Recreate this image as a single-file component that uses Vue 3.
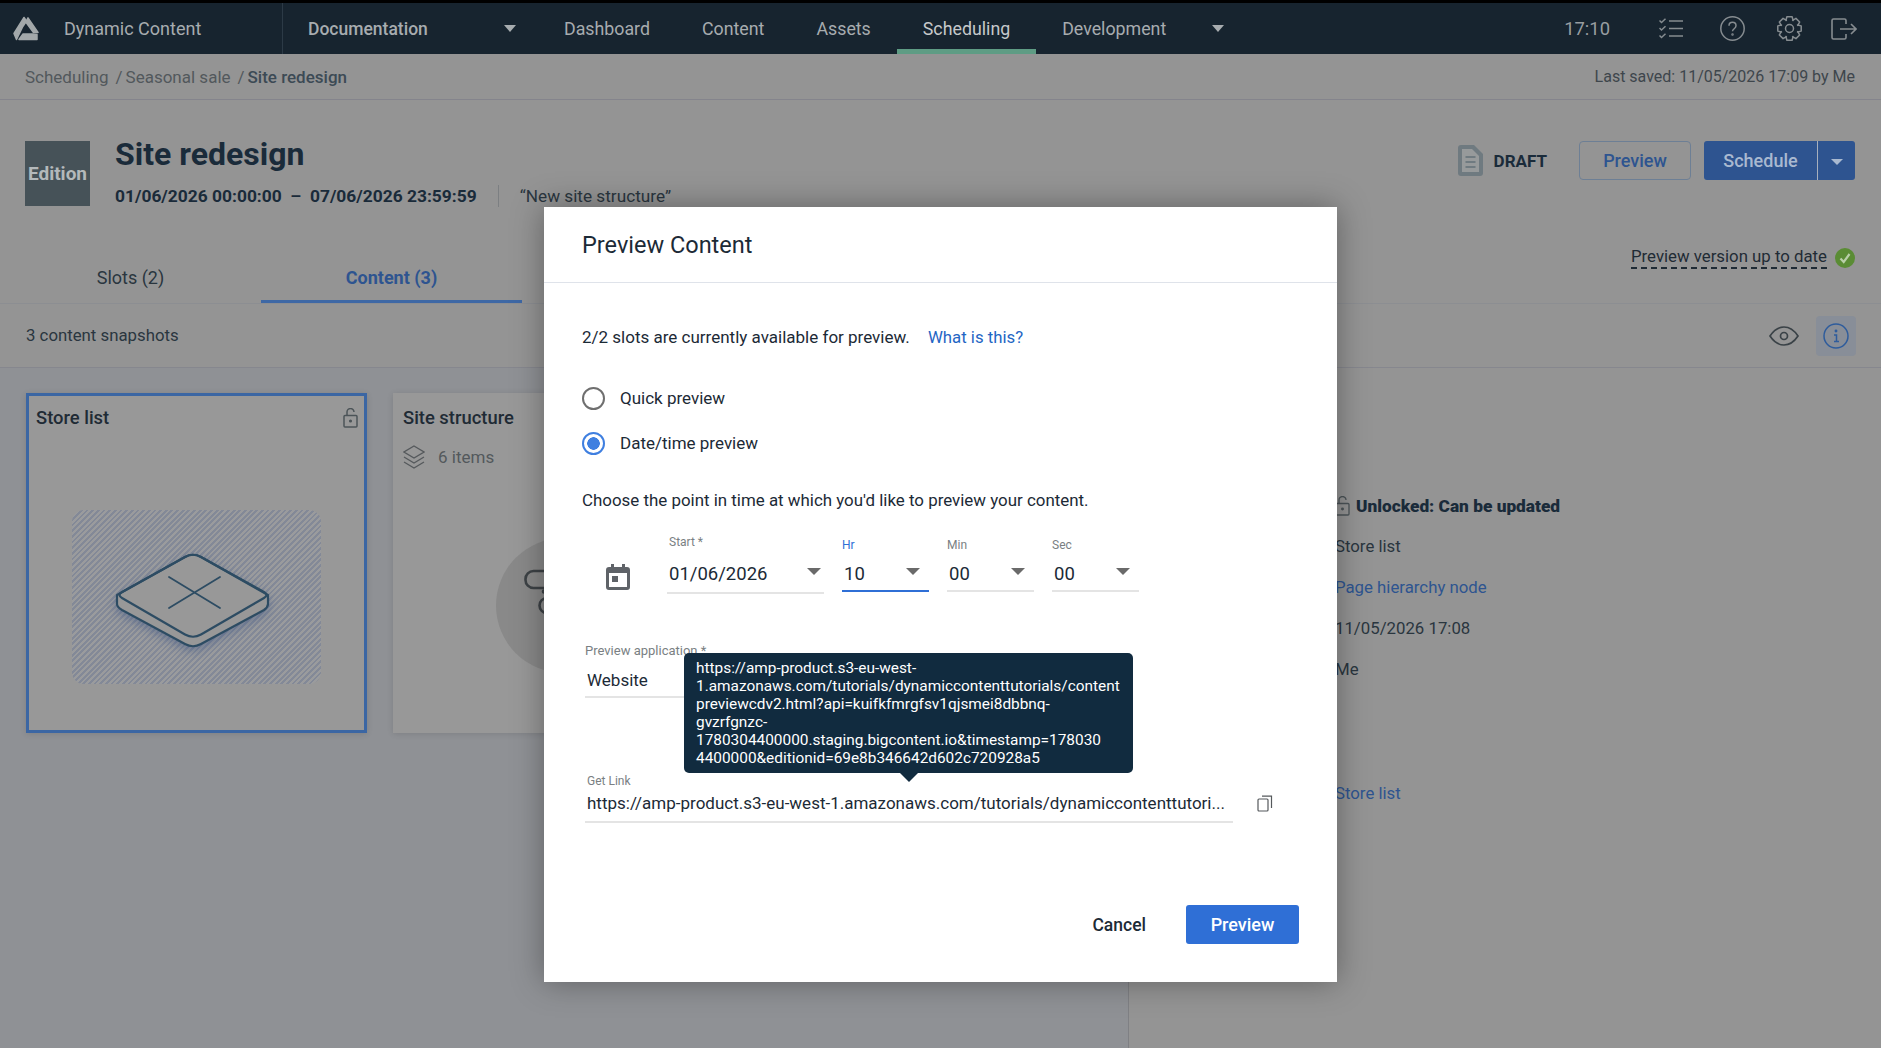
<script setup>
const navItems = ['Dashboard', 'Content', 'Assets', 'Scheduling', 'Development']

const tooltipLines = [
  'https://amp-product.s3-eu-west-',
  '1.amazonaws.com/tutorials/dynamiccontenttutorials/content',
  'previewcdv2.html?api=kuifkfmrgfsv1qjsmei8dbbnq-',
  'gvzrfgnzc-',
  '1780304400000.staging.bigcontent.io&timestamp=178030',
  '4400000&editionid=69e8b346642d602c720928a5'
]

const timeFields = [
  { label: 'Hr', value: '10', active: true },
  { label: 'Min', value: '00' },
  { label: 'Sec', value: '00' }
]

// eight toothed cog outline
function gearPath(cx, cy, outer, inner) {
  const pts = []
  for (let i = 0; i < 8; i++) {
    const a = (i * Math.PI) / 4
    const w = 0.22
    const s = 0.2
    const at = (r, t) => `${(cx + r * Math.sin(t)).toFixed(2)} ${(cy - r * Math.cos(t)).toFixed(2)}`
    pts.push(at(inner, a - w - s), at(outer, a - w), at(outer, a + w), at(inner, a + w + s))
  }
  return 'M' + pts.join('L') + 'Z'
}
const gear = gearPath(12.5, 12.5, 12, 8.8)
</script>

<template>
  <div class="page">
    <header class="topbar">
      <div class="brand">
        <svg class="logo" viewBox="0 0 26 25" width="26" height="25" fill="#a3a8aa" stroke="#a3a8aa" stroke-width="1.500" stroke-linejoin="round">
          <path d="M11 1.500L13.500 5 9.800 10.500 3.500 23.500 1 17.500z" />
          <path d="M15 1.800L25 16.500 20.500 16.500 12.800 6z" />
          <path d="M10 18H19.500L24 18.500 24 23.500 6 23.500z" />
        </svg>
        <span>Dynamic Content</span>
      </div>
      <div class="doc-select">
        <span>Documentation</span>
        <i class="caret"></i>
      </div>
      <nav class="nav">
        <a v-for="item in navItems" :key="item" :class="{ current: item === 'Scheduling' }">{{ item }}</a>
        <i class="caret dev-caret"></i>
      </nav>
      <div class="topbar-right">
        <span class="clock">17:10</span>
        <svg class="ic-tasks" viewBox="0 0 24 21" width="24" height="21" fill="none" stroke="#868c90" stroke-width="1.500">
          <path d="M.5 2.500l2 2L6.500.8M.5 10l2 2 4-3.700M.5 17.500l2 2 4-3.700" />
          <path d="M10 3h14M10 10.500h14M10 18h14" />
        </svg>
        <svg class="ic-help" viewBox="0 0 25 25" width="25" height="25" fill="none" stroke="#868c90" stroke-width="1.500">
          <circle cx="12.500" cy="12.500" r="11.700" />
          <path d="M9 9.800c0-4.600 7-4.600 7 0 0 2.900-3.500 2.900-3.500 5.500" />
          <circle cx="12.500" cy="18.600" r=".5" />
        </svg>
        <svg class="ic-gear" viewBox="0 0 25 25" width="25" height="25" fill="none" stroke="#868c90" stroke-width="1.500" stroke-linejoin="round">
          <path :d="gear" />
          <circle cx="12.500" cy="12.500" r="4" />
        </svg>
        <svg class="ic-exit" viewBox="0 0 26 22" width="26" height="22" fill="none" stroke="#868c90" stroke-width="1.600">
          <path d="M15 6V2.500A1.500 1.500 0 0 0 13.500 1H2.500A1.500 1.500 0 0 0 1 2.500v17A1.500 1.500 0 0 0 2.500 21h11a1.500 1.500 0 0 0 1.500-1.500V16" />
          <path d="M9 11h16M20 6l5 5-5 5" />
        </svg>
      </div>
    </header>

    <div class="crumbs">
      <span>Scheduling</span><span class="sep">/</span><span>Seasonal sale</span><span class="sep">/</span><b>Site redesign</b>
      <span class="saved">Last saved: 11/05/2026 17:09 by Me</span>
    </div>

    <section class="edition">
      <div class="thumb">Edition</div>
      <div class="edition-info">
        <h1>Site redesign</h1>
        <div class="dates">
          <b>01/06/2026 00:00:00 &nbsp;–&nbsp; 07/06/2026 23:59:59</b>
          <span class="quote">“New site structure”</span>
        </div>
      </div>
      <div class="edition-actions">
        <svg viewBox="0 0 25 31" width="25" height="31">
          <path d="M3 0h13l9 9v19a3 3 0 0 1-3 3H3a3 3 0 0 1-3-3V3a3 3 0 0 1 3-3z" fill="#6f7a80" />
          <path d="M4 4h10l7 7v16H4z" fill="#979a9b" />
          <path d="M7.500 12h10M7.500 17h10M7.500 22h10" stroke="#6f7a80" stroke-width="2" />
        </svg>
        <b class="draft">DRAFT</b>
        <button class="btn-outline">Preview</button>
        <div class="split">
          <button>Schedule</button>
          <button class="split-arrow"><i></i></button>
        </div>
      </div>
    </section>

    <div class="tabs">
      <a>Slots (2)</a>
      <a class="current">Content (3)</a>
      <div class="version">
        <span>Preview version up to date</span>
        <svg viewBox="0 0 20 20" width="20" height="20">
          <circle cx="10" cy="10" r="10" fill="#5a8c34" />
          <path d="M5.500 10.500l3.200 3.500 5.800-8" fill="none" stroke="#b9cfa8" stroke-width="2.200" />
        </svg>
      </div>
    </div>

    <div class="toolbar">
      <span class="count">3 content snapshots</span>
      <div class="toolbar-icons">
        <svg viewBox="0 0 30 20" width="30" height="20" fill="none" stroke="#3a4247" stroke-width="1.700">
          <path d="M1 10C6 2.500 10 1 15 1s9 1.500 14 9c-5 7.500-9 9-14 9S6 17.500 1 10z" />
          <circle cx="15" cy="10" r="3.500" />
        </svg>
        <div class="info-toggle">
          <svg viewBox="0 0 26 26" width="26" height="26" fill="none" stroke="#2e5c9c" stroke-width="1.500">
            <circle cx="13" cy="13" r="12" />
            <path d="M11 12h2.500v6.500M11 18.500h5" />
            <circle cx="13" cy="8" r=".7" />
          </svg>
        </div>
      </div>
    </div>

    <main class="panes">
      <div class="cards">
        <article class="card selected">
          <div class="card-head">
            <h3>Store list</h3>
            <svg viewBox="0 0 15 20" width="15" height="20" fill="none" stroke="#4c5458" stroke-width="1.500">
              <rect x="1" y="7.500" width="13" height="11.500" rx="1" />
              <path d="M4 7.500V4a3.500 3.500 0 0 1 7 0" />
              <circle cx="7.500" cy="13" r=".8" fill="#4c5458" />
            </svg>
          </div>
          <div class="hatch">
            <svg class="plate" viewBox="0 0 249 174" width="249" height="174" fill="none" stroke="#2d4c63" stroke-width="2.200" stroke-linejoin="round">
              <path d="M45 85V94Q45 97 50 100L113 134Q121 138.500 129 134L192 100Q196 97 196 94V85L129 47Q121 42.500 113 47Z" fill="#989898" />
              <path d="M113 47Q121 42.500 129 47L192 82Q197 85 192 88L129 124.500Q121 129 113 124.500L50 88Q45 85 50 82Z" />
              <path d="M97 67L148 98M97 98L148 67" stroke-width="1.800" stroke-linecap="round" />
            </svg>
          </div>
        </article>
        <article class="card">
          <div class="card-head">
            <h3>Site structure</h3>
          </div>
          <div class="items">
            <svg viewBox="0 0 22 24" width="22" height="24" fill="none" stroke="#55595c" stroke-width="1.300">
              <path d="M11 1l10 6-10 6L1 7z" />
              <path d="M1 12l10 6 10-6M1 17l10 6 10-6" />
            </svg>
            <span>6 items</span>
          </div>
          <div class="bubble">
            <svg viewBox="0 0 80 80" width="80" height="80" fill="none" stroke="#3d4246" stroke-width="2.600">
              <rect x="1.500" y="5" width="60" height="17" rx="8" />
              <rect x="15.500" y="32" width="40" height="15" rx="7.500" />
              <circle cx="20" cy="25.500" r="1" />
            </svg>
          </div>
        </article>
      </div>

      <aside class="details">
        <div class="lock-row">
          <svg viewBox="0 0 15 20" width="15" height="20" fill="none" stroke="#4c5458" stroke-width="1.300">
            <rect x="1" y="7.500" width="13" height="11.500" rx="1" />
            <path d="M4 7.500V4a3.500 3.500 0 0 1 7 0" />
            <circle cx="7.500" cy="13" r=".8" fill="#4c5458" />
          </svg>
          <b>Unlocked: Can be updated</b>
        </div>
        <p>Store list</p>
        <p class="link">Page hierarchy node</p>
        <p>11/05/2026 17:08</p>
        <p>Me</p>
        <p class="link last">Store list</p>
      </aside>
    </main>

    <div class="modal-layer">
      <div class="modal">
        <h2>Preview Content</h2>
        <div class="modal-body">
          <p class="availability">
            2/2 slots are currently available for preview.
            <a>What is this?</a>
          </p>
          <label class="radio"><i></i>Quick preview</label>
          <label class="radio on"><i></i>Date/time preview</label>
          <p class="choose">Choose the point in time at which you'd like to preview your content.</p>

          <div class="when">
            <svg class="calendar" viewBox="0 0 24 26" width="24" height="26">
              <path d="M5 0h3v3h8V0h3v3h2a3 3 0 0 1 3 3v17a3 3 0 0 1-3 3H3a3 3 0 0 1-3-3V6a3 3 0 0 1 3-3h2z" fill="#5f6368" />
              <rect x="3" y="9" width="18" height="14" fill="#fff" />
              <rect x="6" y="12" width="6" height="6" fill="#5f6368" />
            </svg>
            <div class="field start">
              <label>Start *</label>
              <div class="value">01/06/2026<i class="arrow"></i></div>
            </div>
            <div v-for="f in timeFields" :key="f.label" class="field time" :class="{ active: f.active }">
              <label>{{ f.label }}</label>
              <div class="value">{{ f.value }}<i class="arrow"></i></div>
            </div>
          </div>

          <div class="field application">
            <label>Preview application *</label>
            <div class="value">Website</div>
          </div>

          <div class="link-row">
            <div class="field get-link">
              <label>Get Link</label>
              <div class="value url">https://amp-product.s3-eu-west-1.amazonaws.com/tutorials/dynamiccontenttutori...</div>
              <div class="tooltip">
                <div v-for="line in tooltipLines" :key="line">{{ line }}</div>
              </div>
            </div>
            <svg class="copy" viewBox="0 0 16 17" width="16" height="17" fill="none" stroke="#55595c" stroke-width="1.200">
              <rect x="1" y="4" width="10" height="12" rx="1" />
              <path d="M5 1.200h9.500V13" />
            </svg>
          </div>
        </div>
        <footer class="modal-actions">
          <button class="cancel">Cancel</button>
          <button class="primary">Preview</button>
        </footer>
      </div>
    </div>
  </div>
</template>

<style>
html, body {
  margin: 0;
  background: #949494;
}
</style>

<style scoped>
* {
  box-sizing: border-box;
}
.page {
  position: relative;
  width: 1881px;
  height: 1048px;
  overflow: hidden;
  display: flex;
  flex-direction: column;
  background: #949494;
  color: #1f2b35;
  font-family: Roboto, "Noto Sans", sans-serif;
  font-size: 17px;
}
p, h1, h2, h3 {
  margin: 0;
}
a {
  cursor: pointer;
}

/* top bar */
.topbar {
  display: flex;
  align-items: center;
  height: 54px;
  border-top: 3px solid #000;
  background: #17242f;
  color: #a7acaf;
  flex: none;
}
.brand {
  display: flex;
  align-items: center;
  width: 283px;
  height: 100%;
  padding-left: 13px;
  gap: 25px;
  border-right: 1px solid #2c3a46;
  font-size: 18px;
}
.logo {
  flex: none;
}
.doc-select {
  display: flex;
  align-items: center;
  justify-content: space-between;
  width: 255px;
  padding: 0 22px 0 25px;
  font-size: 17.5px;
  font-weight: 500;
}
.caret {
  width: 0;
  height: 0;
  border-left: 6.500px solid transparent;
  border-right: 6.500px solid transparent;
  border-top: 7px solid #a7acaf;
}
.nav {
  display: flex;
  align-items: center;
  height: 100%;
}
.nav a {
  display: flex;
  align-items: center;
  height: 100%;
  padding: 0 26px;
  font-size: 17.800px;
  border-bottom: 5px solid transparent;
  border-top: 5px solid transparent;
}
.nav a.current {
  color: #c6c9cb;
  border-bottom-color: #5e9c84;
}
.dev-caret {
  margin-left: 20px;
}
.topbar-right {
  margin-left: auto;
  display: flex;
  align-items: center;
  padding-right: 24px;
}
.clock {
  font-size: 18.400px;
  color: #989da0;
}
.ic-tasks {
  margin-left: 49px;
}
.ic-help {
  margin-left: 37px;
}
.ic-gear {
  margin-left: 32px;
}
.ic-exit {
  margin-left: 29px;
}

/* breadcrumb */
.crumbs {
  display: flex;
  align-items: center;
  height: 46px;
  padding: 0 26px 0 25px;
  border-bottom: 1px solid #84848c;
  color: #52585c;
  flex: none;
}
.crumbs b {
  color: #3c4a55;
  font-weight: 500;
}
.sep {
  margin: 0 3px 0 7px;
}
.saved {
  margin-left: auto;
  font-size: 16px;
  color: #3e464c;
}

/* edition head */
.edition {
  display: flex;
  height: 141px;
  padding: 41px 26px 0 25px;
  flex: none;
}
.thumb {
  display: flex;
  align-items: center;
  justify-content: center;
  width: 65px;
  height: 65px;
  background: #465258;
  color: #b4b9bb;
  font-weight: 700;
  font-size: 19px;
}
.edition-info {
  margin-left: 25px;
}
h1 {
  margin-top: -1px;
  font-size: 32px;
  line-height: 28px;
  font-weight: 700;
  color: #1a2b3a;
}
.dates {
  display: flex;
  align-items: center;
  margin-top: 17px;
  color: #1a2b3a;
  font-size: 17.400px;
}
.dates b {
  font-weight: 700;
}
.quote {
  margin-left: 21px;
  padding-left: 21px;
  border-left: 1px solid #7c7f82;
  line-height: 22px;
  font-size: 17.200px;
  color: #2a363f;
}
.edition-actions {
  margin-left: auto;
  display: flex;
  align-items: center;
  height: 39px;
}
.draft {
  margin: 0 32px 0 11px;
  font-weight: 700;
  color: #1a2b3a;
}
button {
  font-family: inherit;
  cursor: pointer;
}
.btn-outline {
  width: 112px;
  height: 39px;
  margin-right: 13px;
  border: 1.500px solid #6d7f95;
  border-radius: 4px;
  background: transparent;
  color: #2e5490;
  font-size: 18px;
  font-weight: 500;
}
.split {
  display: flex;
  height: 39px;
  border-radius: 3px;
  overflow: hidden;
  background: #2e5490;
}
.split button {
  width: 113px;
  border: 0;
  background: none;
  color: #a9b9d0;
  font-size: 18px;
  font-weight: 500;
}
.split .split-arrow {
  display: flex;
  align-items: center;
  justify-content: center;
  width: 38px;
  padding-top: 4px;
  border-left: 1px solid #a7b0bd;
}
.split-arrow i {
  border-left: 6px solid transparent;
  border-right: 6px solid transparent;
  border-top: 6px solid #a9b9d0;
}

/* tabs */
.tabs {
  display: flex;
  align-items: flex-start;
  height: 63px;
  border-bottom: 1px solid #8c8e92;
  flex: none;
  font-size: 18px;
}
.tabs a {
  width: 261px;
  height: 62px;
  padding-top: 26px;
  text-align: center;
  color: #2a363f;
}
.tabs a.current {
  color: #2e5490;
  font-weight: 700;
  border-bottom: 3px solid #3e68a5;
}
.version {
  margin-left: auto;
  margin-right: 26px;
  margin-top: 5px;
  display: flex;
  align-items: center;
  gap: 8px;
  font-size: 16.800px;
  color: #1f2b35;
}
.version span {
  border-bottom: 2px dashed #1f2b35;
  padding-bottom: 1px;
}

/* toolbar */
.toolbar {
  display: flex;
  align-items: center;
  justify-content: space-between;
  height: 64px;
  padding: 0 25px 0 26px;
  border-bottom: 1px solid #86878e;
  flex: none;
  color: #2a363f;
}
.count {
  font-size: 16.800px;
  margin-bottom: 2px;
}
.toolbar-icons {
  display: flex;
  align-items: center;
  gap: 17px;
}
.info-toggle {
  display: flex;
  align-items: center;
  justify-content: center;
  width: 40px;
  height: 40px;
  border-radius: 4px;
  background: #888e98;
}

/* panes */
.panes {
  flex: 1;
  display: flex;
  min-height: 0;
}
.cards {
  width: 1129px;
  flex: none;
  display: flex;
  align-items: flex-start;
  gap: 26px;
  padding: 25px 0 0 26px;
  background: #8f9195;
  border-right: 1px solid #7f8084;
}
.card {
  position: relative;
  width: 341px;
  height: 340px;
  padding: 13px 10px;
  background: #989898;
  box-shadow: 0 1px 6px rgba(0, 0, 0, 0.12);
}
.card.selected {
  border: 3px solid #3b66a3;
  padding: 10px 7px;
}
.card-head {
  display: flex;
  align-items: center;
  justify-content: space-between;
}
.card-head svg {
  margin-right: -1px;
}
h3 {
  font-size: 18.400px;
  font-weight: 500;
  color: #1f2b35;
  line-height: 24px;
}
.hatch {
  margin: 80px 0 0 36px;
  width: 249px;
  height: 174px;
  border-radius: 12px;
  background: repeating-linear-gradient(135deg, #9a9b9d 0, #9a9b9d 2px, #838997 2px, #838997 4px);
}
.plate {
  filter: drop-shadow(0 4px 4px rgba(60, 85, 130, 0.45));
}
.items {
  display: flex;
  align-items: center;
  gap: 13px;
  margin-top: 15px;
  color: #53585c;
}
.bubble {
  position: absolute;
  left: 103px;
  top: 145px;
  display: flex;
  align-items: center;
  justify-content: center;
  width: 135px;
  height: 135px;
  border-radius: 50%;
  background: #898989;
}
.details {
  padding: 126px 0 0 206px;
  line-height: 24px;
  font-size: 16.800px;
  color: #2a363f;
}
.lock-row {
  display: flex;
  align-items: center;
  gap: 6px;
  color: #1a2b3a;
  margin-bottom: 16px;
  font-size: 17.300px;
  font-weight: 700;
}
.details p {
  margin-bottom: 17px;
  white-space: nowrap;
}
.details p.link {
  color: #2e5490;
}
.details p.last {
  margin-top: 100px;
}

/* modal */
.modal-layer {
  position: absolute;
  inset: 0;
  display: flex;
  justify-content: center;
  align-items: flex-start;
  padding-top: 207px;
}
.modal {
  width: 793px;
  height: 775px;
  display: flex;
  flex-direction: column;
  background: #fff;
  color: #1c2a36;
  box-shadow: 0 0 30px rgba(0, 0, 0, 0.35);
}
h2 {
  height: 76px;
  padding: 23px 38px 0;
  border-bottom: 1px solid #dfe3ea;
  font-size: 23.500px;
  line-height: 30px;
  font-weight: 400;
  flex: none;
}
.modal-body {
  flex: 1;
  padding: 42px 38px 0;
}
.availability {
  line-height: 24px;
  margin-bottom: 37px;
}
.availability a {
  margin-left: 14px;
  font-size: 16.800px;
  color: #1f66c4;
}
.radio {
  display: flex;
  align-items: center;
  height: 24px;
  margin-bottom: 21px;
  gap: 15px;
}
.radio i {
  width: 23px;
  height: 23px;
  border: 2.500px solid #6f6f6f;
  border-radius: 50%;
}
.radio.on i {
  border-color: #3f7fe0;
  background: radial-gradient(circle, #3f7fe0 0 6px, #fff 6.500px);
}
.choose {
  margin-top: 33px;
  line-height: 24px;
  font-size: 16.900px;
}
.when {
  display: flex;
  align-items: flex-end;
  margin-top: 23px;
}
.calendar {
  margin: 0 37px 4px 24px;
  flex: none;
}
.field label {
  display: block;
  font-size: 12px;
  line-height: 14px;
  color: #7a7f83;
}
.field .value {
  position: relative;
  font-size: 18.500px;
  line-height: 26px;
  padding-top: 9px;
  padding-bottom: 5px;
  border-bottom: 2px solid #e4e4e4;
}
.field.start {
  width: 157px;
}
.field.start label {
  margin-bottom: 3px;
  padding-left: 2px;
}
.start .value {
  padding-left: 2px;
}
.field.time {
  width: 87px;
  margin-left: 18px;
}
.time .value {
  padding: 10px 0 4px 2px;
  margin-bottom: 2px;
  line-height: 24px;
}
.time.active label {
  color: #2f6fd6;
}
.time.active .value {
  border-bottom-color: #2f6fd6;
}
.arrow {
  position: absolute;
  right: 3px;
  top: 16px;
  border-left: 7px solid transparent;
  border-right: 7px solid transparent;
  border-top: 7px solid #6a6a6a;
}
.time .arrow {
  right: 9px;
}
.application {
  width: 300px;
  margin: 50px 0 0 3px;
}
.application label {
  font-size: 13px;
}
.application .value {
  padding: 9px 2px 3px;
  font-size: 17px;
}
.link-row {
  display: flex;
  align-items: flex-start;
  margin: 77px 0 0 3px;
}
.get-link {
  position: relative;
  width: 648px;
  flex: none;
}
.get-link label {
  padding-left: 2px;
  line-height: 13px;
}
.field .url {
  white-space: nowrap;
  padding: 2px 0 5px 2px;
  font-size: 17px;
}
.tooltip {
  position: absolute;
  left: 99px;
  bottom: 50px;
  width: 449px;
  padding: 6px 12px;
  border-radius: 5px;
  background: #112b3f;
  color: #fff;
  font-size: 15.400px;
  line-height: 18px;
  white-space: nowrap;
}
.tooltip::after {
  content: '';
  position: absolute;
  left: 50%;
  bottom: -9px;
  margin-left: -9px;
  border-left: 9px solid transparent;
  border-right: 9px solid transparent;
  border-top: 9px solid #112b3f;
}
.copy {
  margin: 20px 0 0 24px;
}
.modal-actions {
  display: flex;
  align-items: center;
  justify-content: flex-end;
  height: 77px;
  padding: 0 38px 38px 0;
  flex: none;
}
.cancel {
  border: 0;
  background: none;
  padding: 0;
  margin-right: 40px;
  color: #1c2a36;
  font-size: 17.500px;
  font-weight: 500;
}
.primary {
  width: 113px;
  height: 39px;
  border: 0;
  border-radius: 3px;
  background: #2f6fd6;
  color: #fff;
  font-size: 18px;
  font-weight: 500;
}
</style>
